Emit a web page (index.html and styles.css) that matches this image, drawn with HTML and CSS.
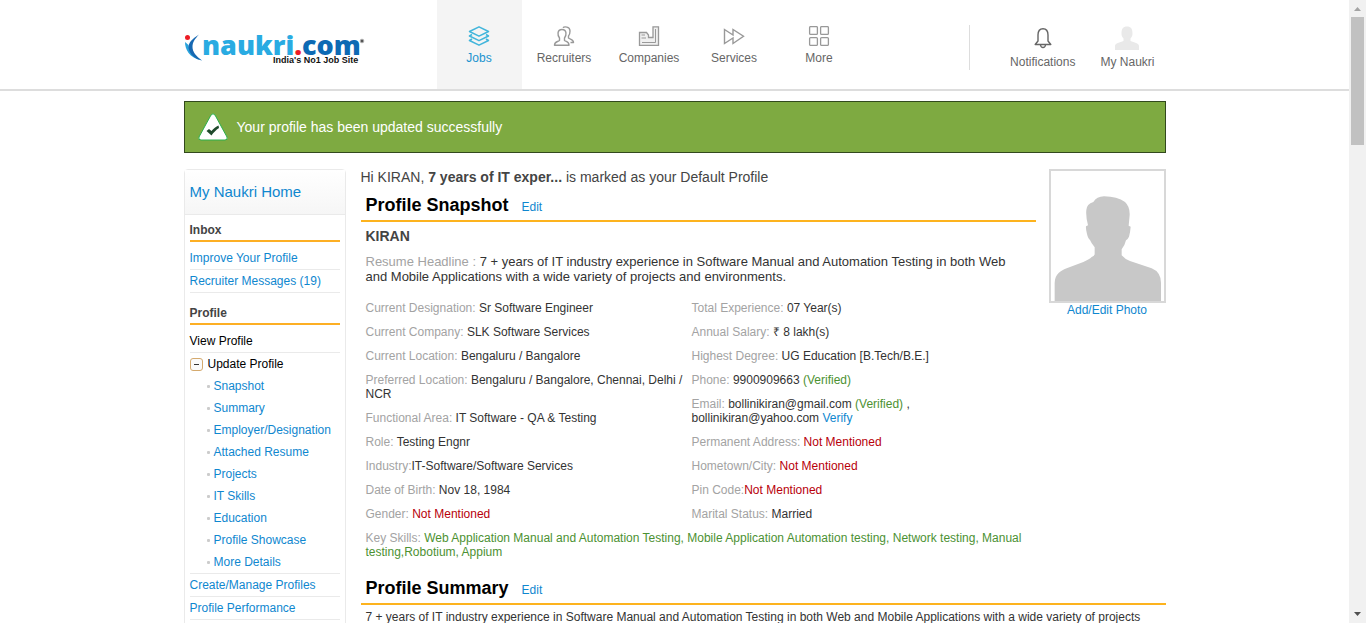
FILE: index.html
```html
<!DOCTYPE html>
<html lang="en">
<head>
<meta charset="utf-8">
<title>My Naukri - Profile</title>
<link rel="stylesheet" href="styles.css">
</head>
<body>
<div class="window">
<div class="page">
  <header class="site-header">
    <div class="wrap header-row">
      <a class="logo" href="#" aria-label="naukri.com">
        <svg width="182" height="42" viewBox="0 -6 182 42">
          <path d="M1 11C1 18 5 27 18 29.500C9 26 5 20 4.500 14Z" fill="#29a3dc"/>
          <path d="M15 3.500C8 8 4 12 4.500 17C6 24 11 28 18 29.500C12 25 8.500 21 8.500 16C8.500 11 11 8 15 3.500Z" fill="#1668b2"/>
          <circle cx="3.500" cy="6.500" r="2.500" fill="#ed1c24"/>
          <text x="18" y="24" class="logo-name"><tspan fill="#29abe2">naukri</tspan><tspan fill="#ed1c24">.</tspan><tspan fill="#0d6ab4">com</tspan></text>
          <circle cx="178" cy="10" r="1.800" fill="#555" stroke="#aaa"/>
          <text x="89" y="32" class="logo-tag">India's No1 Job Site</text>
        </svg>
      </a>
      <nav class="main-nav">
        <a class="nav-item active" href="#">
          <svg width="22" height="20" viewBox="0 0 22 20" fill="none" stroke="currentColor" stroke-width="1.500" stroke-linejoin="round"><path d="M11 .8 20.500 5.500 11 10.200 1.500 5.500Z"/><path d="M4 8.500 1.500 10 11 14.700 20.500 10 18 8.500M4 13 1.500 14.500 11 19.200 20.500 14.500 18 13"/></svg>
          <span>Jobs</span></a>
        <a class="nav-item" href="#">
          <svg width="22" height="20" viewBox="0 0 22 20" fill="none" stroke="#999" stroke-width="1.400" stroke-linejoin="round"><path d="M6.500 14.500V12C4.500 9.500 3.800 3.500 9 3.500S13.500 9.500 11.500 12V14.500C13.500 16 16 15.500 16 19.200H1.500C1.500 15.500 4.500 16 6.500 14.500Z"/><path d="M10 1.800C11 .5 17 .2 17 5C17 8 16 9.500 15.500 10V12C17 13.500 20.500 13 20.500 16.500H17.500"/></svg>
          <span>Recruiters</span></a>
        <a class="nav-item" href="#">
          <svg width="22" height="20" viewBox="0 0 22 20" fill="none" stroke="#999" stroke-width="1.300"><path d="M1.500 19.300V6.500H8.500L10.500 9V11.500H15V.8H20.500V19.300Z" fill="#f0f0f0"/><path d="M3.500 9H7M3.500 12H8M4 16.500H17.500V3" stroke-width="1"/></svg>
          <span>Companies</span></a>
        <a class="nav-item" href="#">
          <svg width="22" height="20" viewBox="0 0 22 20" fill="none" stroke="#999" stroke-width="1.400"><path d="M1.500 3.500 10 9V3.500L20.500 10.200 10 17.500V12L1.500 17.500Z"/></svg>
          <span>Services</span></a>
        <a class="nav-item" href="#">
          <svg width="22" height="20" viewBox="0 0 22 20" fill="none" stroke="#999" stroke-width="1.300"><rect x="1.600" y=".6" width="7.800" height="7.800" rx="1"/><rect x="12.600" y=".6" width="7.800" height="7.800" rx="1"/><rect x="1.600" y="11.600" width="7.800" height="7.800" rx="1"/><rect x="12.600" y="11.600" width="7.800" height="7.800" rx="1"/></svg>
          <span>More</span></a>
      </nav>
      <div class="user-nav">
        <a class="user-item" href="#">
          <svg width="18" height="24" viewBox="0 0 18 24" fill="none" stroke="#666" stroke-width="1.400" stroke-linejoin="round"><path d="M4 15V9C4 5 6 2.700 9 2.700S14 5 14 9V15L16.800 18.500H1.200Z"/><path d="M6.500 19C7 22.300 11 22.300 11.500 19"/></svg>
          <span>Notifications</span></a>
        <a class="user-item" href="#">
          <svg width="24" height="24" viewBox="0 0 24 24" fill="#e9e9e9"><path d="M0 24V20C0 17 5 16.500 8.500 15V12.500C7 11 6.500 9.500 6.500 7.500C6.500 3 8 .5 12 .5S17.500 3 17.500 7.500C17.500 9.500 17 11 15.500 12.500V15C19 16.500 24 17 24 20V24Z"/></svg>
          <span>My Naukri</span></a>
      </div>
    </div>
  </header>

  <div class="wrap">
    <div class="banner" role="status">
      <svg width="30" height="28" viewBox="0 0 30 28"><path d="M13 2Q15 -.5 17 2L29 24Q30 27 27 27H3Q0 27 1 24Z" fill="#fff" stroke="#2bb04c"/><path d="M8.500 18 11 16 13.500 18C15.500 15.500 18 13.500 20.500 12.500L21 15C18 17 15.500 19.500 13.500 22.500Z" fill="#1f4a2c"/></svg>
      <span>Your profile has been updated successfully</span>
    </div>

    <div class="columns">
      <aside class="sidebar">
        <a class="side-home" href="#">My Naukri Home</a>
        <div class="side-body">
          <h3 class="side-title">Inbox</h3>
          <ul class="side-list">
            <li><a href="#">Improve Your Profile</a></li>
            <li><a href="#">Recruiter Messages (19)</a></li>
          </ul>
          <h3 class="side-title spaced">Profile</h3>
          <ul class="side-list">
            <li><a class="current" href="#">View Profile</a></li>
            <li>
              <div class="branch"><button class="toggle" type="button" aria-label="Collapse Update Profile"></button><a class="current" href="#">Update Profile</a></div>
              <ul class="sub-list">
                <li><a href="#">Snapshot</a></li>
                <li><a href="#">Summary</a></li>
                <li><a href="#">Employer/Designation</a></li>
                <li><a href="#">Attached Resume</a></li>
                <li><a href="#">Projects</a></li>
                <li><a href="#">IT Skills</a></li>
                <li><a href="#">Education</a></li>
                <li><a href="#">Profile Showcase</a></li>
                <li><a href="#">More Details</a></li>
              </ul>
            </li>
            <li><a href="#">Create/Manage Profiles</a></li>
            <li><a href="#">Profile Performance</a></li>
          </ul>
        </div>
      </aside>

      <main class="content">
        <div class="top-row">
          <div class="snapshot">
            <p class="greeting">Hi KIRAN, <b>7 years of IT exper...</b> is marked as your Default Profile</p>
            <div class="section-head"><h2>Profile Snapshot</h2><a href="#">Edit</a></div>
            <div class="section-body">
              <h3 class="person">KIRAN</h3>
              <p class="headline"><span class="label">Resume Headline :</span> 7 + years of IT industry experience in Software Manual and Automation Testing in both Web and Mobile Applications with a wide variety of projects and environments.</p>
              <div class="details">
                <div class="detail-col">
                  <p><span class="label">Current Designation:</span> Sr Software Engineer</p>
                  <p><span class="label">Current Company:</span> SLK Software Services</p>
                  <p><span class="label">Current Location:</span> Bengaluru / Bangalore</p>
                  <p><span class="label">Preferred Location:</span> Bengaluru / Bangalore, Chennai, Delhi / NCR</p>
                  <p><span class="label">Functional Area:</span> IT Software - QA &amp; Testing</p>
                  <p><span class="label">Role:</span> Testing Engnr</p>
                  <p><span class="label">Industry:</span>IT-Software/Software Services</p>
                  <p><span class="label">Date of Birth:</span> Nov 18, 1984</p>
                  <p><span class="label">Gender:</span> <span class="missing">Not Mentioned</span></p>
                </div>
                <div class="detail-col">
                  <p><span class="label">Total Experience:</span> 07 Year(s)</p>
                  <p><span class="label">Annual Salary:</span> ₹ 8 lakh(s)</p>
                  <p><span class="label">Highest Degree:</span> UG Education [B.Tech/B.E.]</p>
                  <p><span class="label">Phone:</span> 9900909663 <span class="ok">(Verified)</span></p>
                  <p><span class="label">Email:</span> bollinikiran@gmail.com <span class="ok">(Verified)</span> ,<br>bollinikiran@yahoo.com <a href="#">Verify</a></p>
                  <p><span class="label">Permanent Address:</span> <span class="missing">Not Mentioned</span></p>
                  <p><span class="label">Hometown/City:</span> <span class="missing">Not Mentioned</span></p>
                  <p><span class="label">Pin Code:</span><span class="missing">Not Mentioned</span></p>
                  <p><span class="label">Marital Status:</span> Married</p>
                </div>
              </div>
              <p class="skills"><span class="label">Key Skills:</span> Web Application Manual and Automation Testing, Mobile Application Automation testing, Network testing, Manual testing,Robotium, Appium</p>
            </div>
          </div>
          <div class="photo">
            <svg class="portrait" viewBox="63 33 339 390" role="img" aria-label="Profile photo"><path fill="#c8c8c8" d="M74 423V368C76 342 90 333 110 325L160 306Q180 297 184 292Q194 288 194 282V262Q184 250 180 240Q174 236 171 222Q167 208 168 199L174 196Q167 170 169 150Q170 132 190 126Q200 110 222 109Q262 110 285 126Q300 140 299 165L296 197 302 200Q301 215 297 230Q292 240 288 241Q284 258 275 268V286Q285 298 300 303L365 325Q392 336 393 368V423Z"/></svg>
            <a href="#">Add/Edit Photo</a>
          </div>
        </div>
        <div class="section-head summary-head"><h2>Profile Summary</h2><a href="#">Edit</a></div>
        <p class="summary">7 + years of IT industry experience in Software Manual and Automation Testing in both Web and Mobile Applications with a wide variety of projects</p>
      </main>
    </div>
  </div>
</div>
<div class="scrollbar" aria-hidden="true">
  <svg width="17" height="17" viewBox="0 0 17 17"><path d="M5 11 8.500 7 12 11Z" fill="#a3a3a3"/></svg>
  <div class="thumb"></div>
  <svg class="down" width="17" height="17" viewBox="0 0 17 17"><path d="M5 6 8.500 10 12 6Z" fill="#505050"/></svg>
</div>
</div>
</body>
</html>
```
FILE: styles.css
```css
* { box-sizing: border-box; }
body {
  margin: 0;
  font: 12px/14px "Liberation Sans", Arial, sans-serif;
  color: #333;
  background: #fff;
}
h2, h3, p, ul { margin: 0; padding: 0; }
ul { list-style: none; }
a { color: #0f87cf; text-decoration: none; }
svg { display: block; }

.window { display: flex; height: 100vh; overflow: hidden; }
.page { flex: 1; min-width: 0; overflow: hidden; }
.wrap { max-width: 982px; margin: 0 auto; }

.site-header { border-bottom: 2px solid #ddd; }
.header-row { display: flex; height: 89px; }
.logo { width: 253px; padding-top: 25px; }
.logo-name { font: 800 27px "Open Sans", sans-serif; }
.logo-tag { font: bold 9px "Liberation Sans", Arial, sans-serif; fill: #111; }
.main-nav { display: flex; }
.nav-item {
  display: flex;
  flex-direction: column;
  align-items: center;
  gap: 5px;
  width: 85px;
  padding-top: 26px;
  color: #666;
}
.nav-item.active { background: #f4f4f4; color: #2193cf; }
.nav-item.active svg { color: #41b5db; }
.user-nav {
  display: flex;
  gap: 25px;
  height: 45px;
  margin: 25px 11px 0 auto;
  padding-left: 40px;
  border-left: 1px solid #ddd;
}
.user-item {
  display: flex;
  flex-direction: column;
  align-items: center;
  gap: 5px;
  padding-top: 1px;
  color: #666;
}

.banner {
  display: flex;
  align-items: center;
  gap: 9px;
  height: 52px;
  margin-top: 10px;
  padding-left: 13px;
  border: 1px solid #32491d;
  background: #7eaa41;
  color: #fff;
  font-size: 14px;
}

.columns { display: flex; align-items: flex-start; gap: 15px; margin-top: 16px; }
.sidebar { width: 162px; border: 1px solid #eaeaea; border-radius: 4px; }
.side-home {
  display: block;
  padding: 11px 5px 12px;
  border-bottom: 1px solid #eaeaea;
  background: linear-gradient(#fff, #f6f6f6);
  font-size: 15px;
  line-height: 21px;
}
.side-body { padding: 7px 5px; }
.side-title {
  margin-bottom: 5px;
  padding-bottom: 2px;
  border-bottom: 2px solid #fdaf24;
  font-size: 12px;
  line-height: 16px;
  color: #444;
}
.side-title.spaced { margin-top: 12px; }
.side-list > li { border-bottom: 1px solid #eaeaea; line-height: 22px; }
.side-list .current { color: #000; }
.branch { display: flex; align-items: center; gap: 5px; }
.toggle {
  display: flex;
  align-items: center;
  justify-content: center;
  width: 13px;
  height: 13px;
  padding: 0;
  border: 1px solid #d5aa6e;
  border-radius: 3px;
  background: #fafafa;
}
.toggle::before { content: ""; width: 5px; height: 1px; background: #333; }
.sub-list li { display: flex; align-items: center; gap: 4px; padding-left: 17px; }
.sub-list li::before { content: ""; width: 3px; height: 3px; border-radius: 1px; background: #ccc; }

.content { flex: 1; min-width: 0; }
.top-row { display: flex; gap: 13px; }
.snapshot { flex: 1; min-width: 0; }
.greeting { font-size: 14px; line-height: 16px; color: #444; }
.section-head {
  display: flex;
  align-items: baseline;
  gap: 13px;
  margin-top: 9px;
  padding: 0 5px 4px;
  border-bottom: 2px solid #fdb31e;
}
.section-head h2 { font-size: 18px; line-height: 22px; color: #000; }
.section-body { padding-left: 5px; }
.person { margin-top: 6px; font-size: 14px; line-height: 16px; color: #444; }
.headline { margin-top: 10px; padding-right: 20px; font-size: 13px; line-height: 15px; }
.label { color: #a3a3a3; }
.details { display: flex; gap: 6px; margin-top: 17px; }
.detail-col { flex: 1; display: flex; flex-direction: column; gap: 10px; }
.detail-col:first-child { flex: 0 0 320px; }
.missing { color: #b8000b; }
.ok, .skills { color: #4c9132; }
.skills { margin-top: 10px; }
.photo { width: 117px; text-align: center; }
.portrait { width: 100%; border: 2px solid #d8d8d8; }
.summary-head { margin-top: 18px; }
.summary { margin-top: 5px; padding-left: 5px; }

.scrollbar { display: flex; flex-direction: column; width: 17px; background: #f1f1f1; }
.thumb { height: 128px; margin: 0 2px; background: #c1c1c1; }
.down { margin-top: auto; }
```
